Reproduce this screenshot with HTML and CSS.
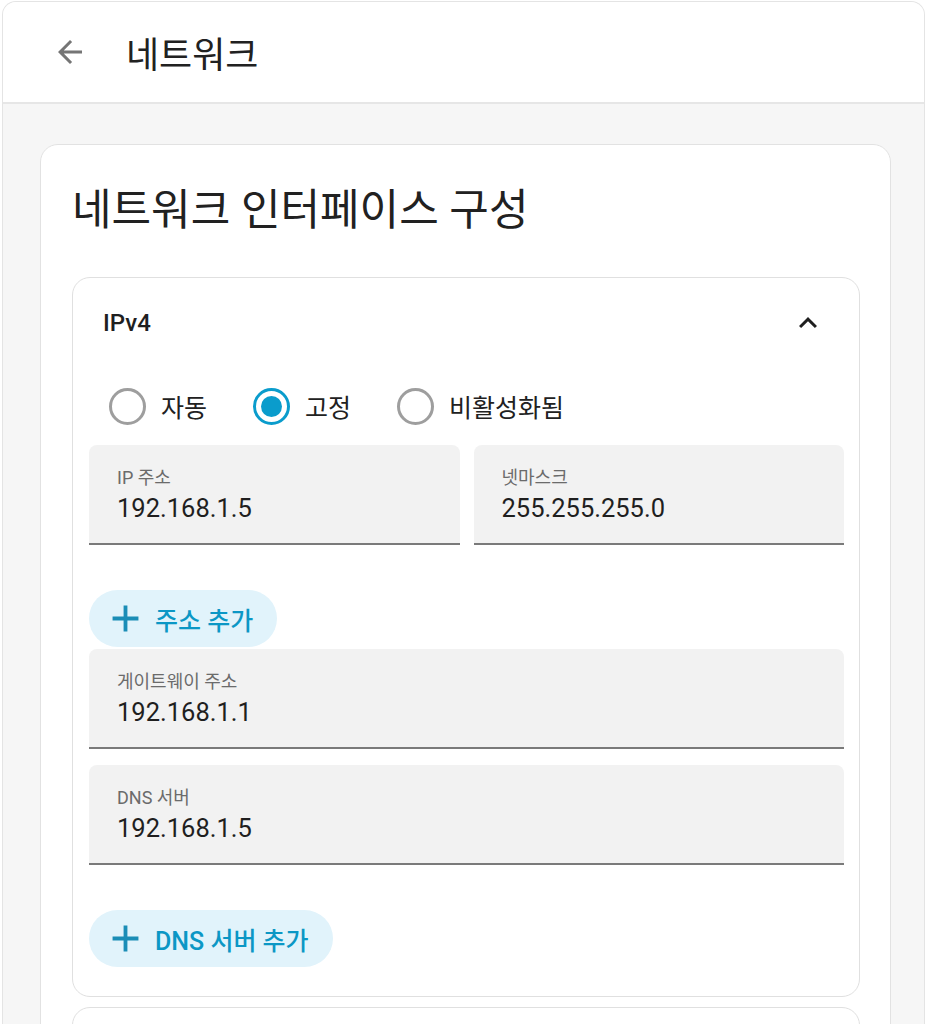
FILE: index.html
```html
<!DOCTYPE html>
<html lang="ko">
<head>
<meta charset="utf-8">
<title>네트워크</title>
<link rel="stylesheet" href="styles.css">
</head>
<body>
<div class="app">
  <header class="topbar">
    <button class="icon-btn back" aria-label="뒤로">
      <svg viewBox="0 0 24 24" width="36" height="36"><path d="M20 11H7.83l5.59-5.59L12 4l-8 8 8 8 1.41-1.41L7.83 13H20v-2z" fill="currentColor"/></svg>
    </button>
    <h1 class="topbar-title">네트워크</h1>
  </header>
  <main class="content">
    <section class="card">
      <h2 class="card-title">네트워크 인터페이스 구성</h2>
      <div class="panel">
        <div class="panel-head">
          <span class="panel-name">IPv4</span>
          <svg class="chevron" viewBox="0 0 24 24" width="36" height="36"><path d="M12 8l-6 6 1.41 1.41L12 10.83l4.59 4.58L18 14z" fill="currentColor"/></svg>
        </div>
        <div class="radios">
          <label class="radio"><span class="radio-dot"></span><span class="radio-label">자동</span></label>
          <label class="radio checked"><span class="radio-dot"></span><span class="radio-label">고정</span></label>
          <label class="radio"><span class="radio-dot"></span><span class="radio-label">비활성화됨</span></label>
        </div>
        <div class="field-row">
          <div class="field">
            <span class="field-label">IP 주소</span>
            <span class="field-value">192.168.1.5</span>
          </div>
          <div class="field">
            <span class="field-label">넷마스크</span>
            <span class="field-value">255.255.255.0</span>
          </div>
        </div>
        <button class="add-btn add-addr">
          <svg viewBox="0 0 24 24" width="27" height="27"><path d="M12 0.5v23M0.5 12h23" stroke="currentColor" stroke-width="3.4" fill="none"/></svg>
          <span>주소 추가</span>
        </button>
        <div class="field">
          <span class="field-label">게이트웨이 주소</span>
          <span class="field-value">192.168.1.1</span>
        </div>
        <div class="field dns-field">
          <span class="field-label">DNS 서버</span>
          <span class="field-value">192.168.1.5</span>
        </div>
        <button class="add-btn add-dns">
          <svg viewBox="0 0 24 24" width="27" height="27"><path d="M12 0.5v23M0.5 12h23" stroke="currentColor" stroke-width="3.4" fill="none"/></svg>
          <span>DNS 서버 추가</span>
        </button>
      </div>
      <div class="panel panel-next"></div>
    </section>
  </main>
</div>
</body>
</html>
```
FILE: styles.css
```css
html, body {
  margin: 0;
  padding: 0;
  background: #ffffff;
  height: 100%;
  overflow: hidden;
}
body {
  font-family: Roboto, "Noto Sans CJK KR", sans-serif;
  color: #1f1f1f;
}
.app {
  margin: 1px 3px 0 2px;
  border: 1px solid #e4e4e4;
  border-bottom: none;
  border-radius: 14px 14px 0 0;
  background: #f6f6f6;
  min-height: 1100px;
  overflow: hidden;
}
.topbar {
  height: 100px;
  background: #ffffff;
  border-bottom: 2px solid #e6e6e6;
  display: flex;
  align-items: center;
  padding-left: 49px;
  gap: 38px;
}
.icon-btn {
  border: none;
  background: none;
  padding: 0;
  color: #757575;
  display: flex;
}
.topbar-title {
  margin: 0;
  font-size: 36px;
  font-weight: 400;
  color: #212121;
  letter-spacing: 0;
}
.content {
  padding: 40px 33px 0 37px;
}
.card {
  background: #ffffff;
  border: 1px solid #e2e2e2;
  border-radius: 18px;
  padding: 0 30px 0 31px;
}
.card-title {
  margin: 0;
  padding: 41px 0 43px 0;
  font-size: 43px;
  font-weight: 400;
  color: #212121;
  line-height: 48px;
}
.panel {
  border: 1px solid #e0e0e0;
  border-radius: 18px;
  padding: 0 15px 29px 16px;
}
.panel-next {
  margin-top: 10px;
  height: 60px;
  padding: 0;
}
.panel-head {
  display: flex;
  justify-content: space-between;
  align-items: center;
  height: 90px;
  padding: 0 18px 0 14px;
}
.panel-name {
  font-size: 24px;
  font-weight: 500;
  color: #1f1f1f;
}
.chevron {
  color: #1f1f1f;
}
.radios {
  display: flex;
  align-items: center;
  height: 78px;
  padding-left: 20px;
  gap: 46px;
  margin-top: -1px;
}
.radio {
  display: flex;
  align-items: center;
  gap: 15px;
}
.radio-dot {
  width: 31px;
  height: 31px;
  border: 3px solid #9e9e9e;
  border-radius: 50%;
  box-sizing: content-box;
  position: relative;
  flex: none;
}
.radio.checked .radio-dot {
  border-color: #0a9ccc;
}
.radio.checked .radio-dot::after {
  content: "";
  position: absolute;
  inset: 5px;
  border-radius: 50%;
  background: #0a9ccc;
}
.radio-label {
  font-size: 25px;
  color: #212121;
}
.field-row {
  display: grid;
  grid-template-columns: 1fr 1fr;
  gap: 14px;
}
.field {
  background: #f2f2f2;
  border-radius: 8px 8px 0 0;
  border-bottom: 2px solid #7a7a7a;
  height: 100px;
  box-sizing: border-box;
  padding: 21px 28px 0;
  display: flex;
  flex-direction: column;
}
.field-label {
  font-size: 18px;
  color: #6b6b6b;
  line-height: 24px;
}
.field-value {
  font-size: 25.5px;
  color: #1f1f1f;
  line-height: 34px;
  margin-top: 1px;
}
.dns-field {
  margin-top: 16px;
}
.add-btn {
  display: flex;
  align-items: center;
  gap: 16px;
  border: none;
  background: #e1f3fb;
  color: #0b97c5;
  border-radius: 29px;
  height: 57px;
  padding: 0 24px 0 23px;
  font-family: Roboto, "Noto Sans CJK KR", sans-serif;
  font-size: 25px;
  font-weight: 500;
}
.add-btn svg {
  color: #1b8db6;
}
.add-addr {
  margin: 45px 0 2px;
}
.add-dns {
  margin-top: 45px;
}
```
